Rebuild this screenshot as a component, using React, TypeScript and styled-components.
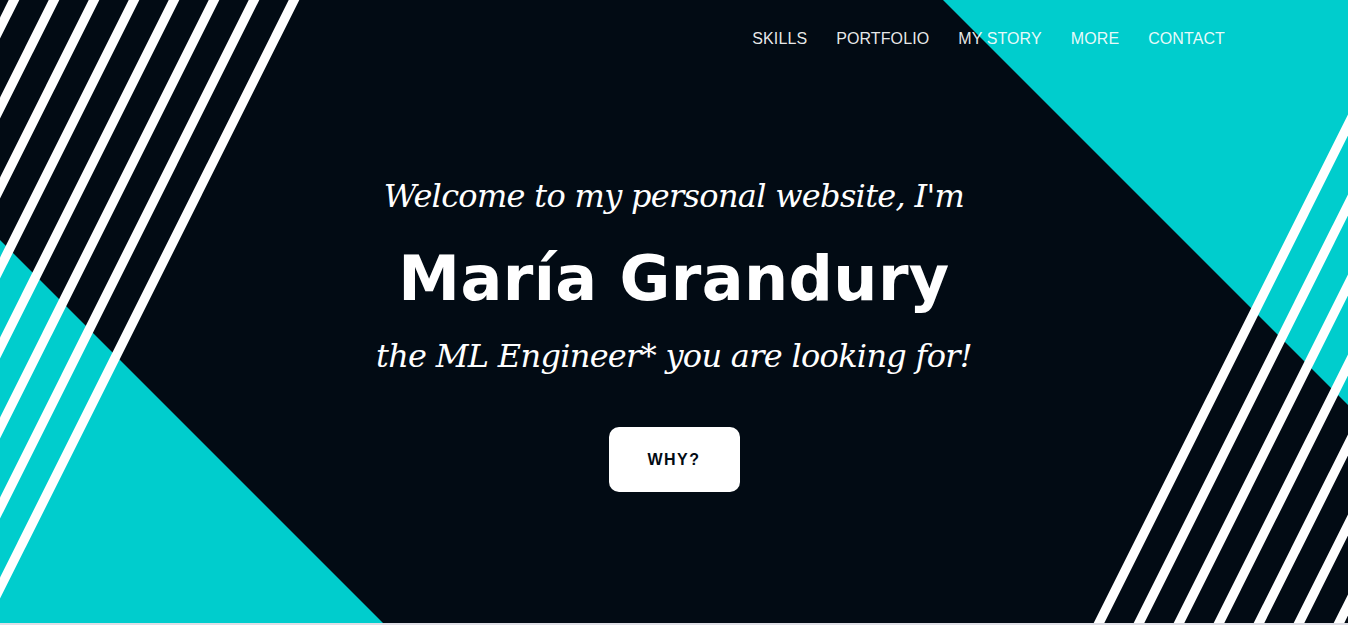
import React from "react";
import styled, { createGlobalStyle } from "styled-components";

const GlobalStyle = createGlobalStyle`
  html, body { margin: 0; padding: 0; }
  body { background: #dfdfe6; font-family: "Liberation Sans", Arial, sans-serif; }
  * { box-sizing: border-box; }
`;

const DARK = "#020b14";
const TEAL = "#00cdcd";

const Hero = styled.section`
  position: relative;
  height: 623px;
  overflow: hidden;
  background: ${DARK};
  display: flex;
  flex-direction: column;
`;

const Backdrop = styled.svg`
  position: absolute;
  inset: 0;
  width: 100%;
  height: 100%;
  pointer-events: none;
`;

const Nav = styled.nav`
  position: relative;
  display: flex;
  justify-content: flex-end;
  gap: 29px;
  padding: 29px 123px 0 0;
`;

const NavLink = styled.a`
  font-family: "Liberation Sans", Arial, sans-serif;
  font-size: 16px;
  line-height: 20px;
  color: rgba(255, 255, 255, 0.92);
  text-transform: uppercase;
  text-decoration: none;
  letter-spacing: 0.1px;
`;

const Main = styled.main`
  position: relative;
  display: flex;
  flex-direction: column;
  align-items: center;
  padding-top: 127px;
  color: #fff;
  text-align: center;
`;

const Tagline = styled.p<{ $gap?: number }>`
  margin: ${(p) => p.$gap ?? 0}px 0 0;
  font-family: "DejaVu Serif", "Liberation Serif", serif;
  font-style: italic;
  font-size: 32px;
  line-height: 40px;
  letter-spacing: -0.7px;
  color: #fff;
`;

const Name = styled.h1`
  margin: 28px 0 0;
  font-family: "DejaVu Sans", "Liberation Sans", sans-serif;
  font-weight: 700;
  font-size: 62px;
  line-height: 70px;
  letter-spacing: 0.4px;
  color: #fff;
`;

const WhyButton = styled.button`
  margin-top: 51px;
  width: 131px;
  height: 65px;
  border: none;
  border-radius: 10px;
  background: #fff;
  color: ${DARK};
  font-family: "Liberation Sans", Arial, sans-serif;
  font-weight: 700;
  font-size: 16px;
  letter-spacing: 1.5px;
  cursor: pointer;
`;

const H = 623;
const SLOPE = 0.5;
const topLeft = Array.from({ length: 8 }, (_, k) => 14 + 40 * k);
const bottomRight = Array.from({ length: 7 }, (_, k) => 1099 + 40 * k);

function Decor() {
  return (
    <Backdrop viewBox={`0 0 1348 ${H}`} preserveAspectRatio="none" aria-hidden>
      <polygon points="943,0 1348,0 1348,405" fill={TEAL} />
      <polygon points={`0,240 0,${H} 383,${H}`} fill={TEAL} />
      {topLeft.map((x0) => (
        <line
          key={`tl${x0}`}
          x1={x0 + SLOPE * 20}
          y1={-20}
          x2={x0 - SLOPE * (H + 20)}
          y2={H + 20}
          stroke="#fff"
          strokeWidth={9.5}
        />
      ))}
      {bottomRight.map((xb) => (
        <line
          key={`br${xb}`}
          x1={xb - SLOPE * 20}
          y1={H + 20}
          x2={xb + SLOPE * (H + 20)}
          y2={-20}
          stroke="#fff"
          strokeWidth={9.5}
        />
      ))}
    </Backdrop>
  );
}

export default function App() {
  return (
    <>
      <GlobalStyle />
      <Hero>
        <Decor />
        <Nav>
          {["Skills", "Portfolio", "My Story", "More", "Contact"].map((l) => (
            <NavLink key={l} href={`#${l.toLowerCase().replace(" ", "-")}`}>
              {l}
            </NavLink>
          ))}
        </Nav>
        <Main>
          <Tagline>Welcome to my personal website, I'm</Tagline>
          <Name>María Grandury</Name>
          <Tagline $gap={22}>the ML Engineer* you are looking for!</Tagline>
          <WhyButton>WHY?</WhyButton>
        </Main>
      </Hero>
    </>
  );
}
